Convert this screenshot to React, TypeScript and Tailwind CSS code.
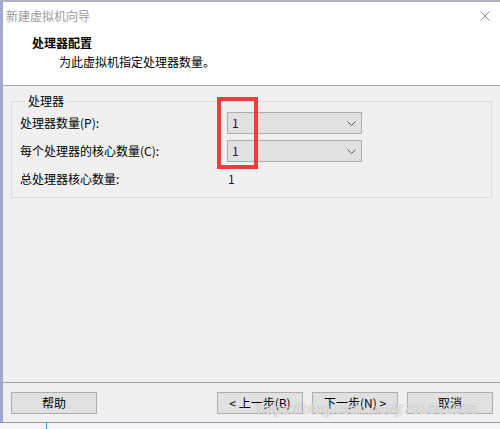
import { useState } from 'react'

const font = "font-['Microsoft_YaHei_UI','Noto_Sans_CJK_SC',sans-serif]"

function Chevron() {
  return (
    <svg width="9" height="5" viewBox="0 0 9 5" className="shrink-0">
      <path d="M0.5 0.5 L4.5 4.5 L8.5 0.5" fill="none" stroke="#555555" strokeWidth="1" />
    </svg>
  )
}

function Combo({ value }: { value: string }) {
  return (
    <div className="w-[135px] h-[22px] bg-[#e1e1e1] border border-[#adadad] flex items-center justify-between pl-[4px] pr-[5px]">
      <span className="text-[#14143c] leading-none">{value}</span>
      <Chevron />
    </div>
  )
}

function Btn({ label }: { label: string }) {
  return (
    <button className="w-[86px] h-[22px] bg-[#e1e1e1] border border-[#adadad] text-[12px] text-black flex items-center justify-center leading-none">
      {label}
    </button>
  )
}

export default function App() {
  const [cpus]  = useState('1')
  const [cores] = useState('1')
  const total   = String(Number(cpus) * Number(cores))

  return (
    <div className={`w-[500px] h-[429px] bg-[#f4f5f8] overflow-hidden relative text-[12px] ${font}`}>
      <div className="h-[422px] flex flex-col bg-[#f0f0f0] border-t-2 border-t-[#b0b4c2] border-l-[3px] border-l-[#a3aacd] shadow-[0_1px_0_#9a9a9a]">
        {/* header */}
        <div className="h-[84px] bg-white border-b border-[#a0a0a0] flex flex-col">
          <div className="flex items-center justify-between pt-[6px] pl-[3px] pr-[10px] h-[22px]">
            <span className="text-[#9a9a9a] leading-[16px]">新建虚拟机向导</span>
            <svg width="10" height="10" viewBox="0 0 10 10">
              <path d="M0.5 0.5 L9.5 9.5 M9.5 0.5 L0.5 9.5" stroke="#8a8a8a" strokeWidth="1" />
            </svg>
          </div>
          <div className="mt-[11px] pl-[29px] font-bold text-black leading-[16px]">处理器配置</div>
          <div className="mt-[3px] pl-[56px] text-black leading-[16px]">为此虚拟机指定处理器数量。</div>
        </div>

        {/* body */}
        <div className="flex-1 px-[8px] pt-[7px]">
          <fieldset className="border border-[#dcdcdc] pl-[8px] pb-[7px]">
            <legend className="ml-[6px] px-[2px] leading-[16px] text-black">处理器</legend>
            <div className="flex flex-col gap-[6px] mt-[3px]">
              <div className="flex items-center h-[22px]">
                <span className="w-[207px] text-black">处理器数量(P):</span>
                <Combo value={cpus} />
              </div>
              <div className="flex items-center h-[22px]">
                <span className="w-[207px] text-black">每个处理器的核心数量(C):</span>
                <Combo value={cores} />
              </div>
              <div className="flex items-center h-[22px]">
                <span className="w-[208px] text-black">总处理器核心数量:</span>
                <span className="text-[#14143c]">{total}</span>
              </div>
            </div>
          </fieldset>
        </div>

        {/* footer */}
        <div className="h-[40px] border-t border-[#a0a0a0] pt-[9px] pl-[8px] flex">
          <Btn label="帮助" />
          <div className="ml-[120px] flex gap-[9px]">
            <Btn label="< 上一步(B)" />
            <Btn label="下一步(N) >" />
            <Btn label="取消" />
          </div>
        </div>
      </div>
      <div className="h-[7px] ml-[46px] w-px bg-[#4a8fd6]" />

      {/* highlight box */}
      <div className="absolute left-[217px] top-[97px] w-[41px] h-[72px] border-4 border-[#f03c3c]" />

      {/* watermark */}
      <div className="absolute left-[257px] top-[401px] text-[15px] leading-none font-['Liberation_Sans',sans-serif] text-white/80 [text-shadow:0_0_1px_rgba(0,0,0,0.45)] pointer-events-none">
        https://blog.csdn.net/jt781861965
      </div>
    </div>
  )
}
